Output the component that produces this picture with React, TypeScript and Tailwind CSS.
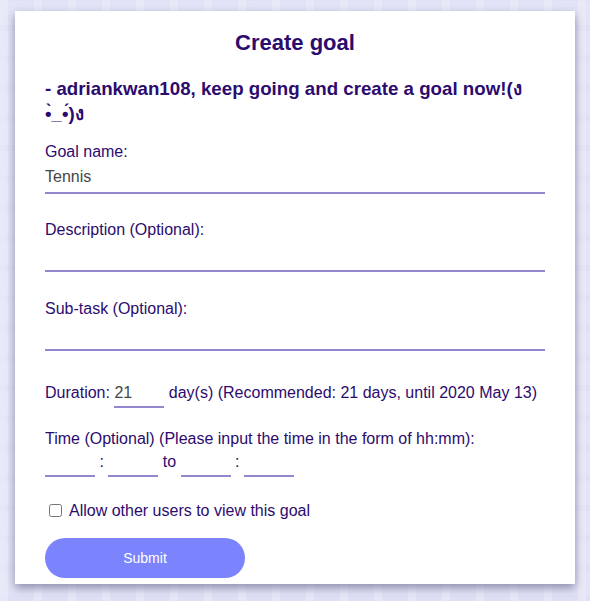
export default function App() {
  return (
    <div className="min-h-[601px] w-full bg-[#e3e4f7] bg-[repeating-linear-gradient(90deg,rgba(255,255,255,0.22)_0px,rgba(255,255,255,0.22)_8px,transparent_8px,transparent_34px),repeating-linear-gradient(0deg,rgba(205,205,240,0.18)_0px,rgba(205,205,240,0.18)_6px,transparent_6px,transparent_30px)] pt-[11px] font-['Liberation_Sans',Arial,sans-serif]">
      <div className="ml-[15px] w-[560px] bg-white px-[30px] pt-[19px] pb-[6px] text-[#2c0b6e] shadow-[0_4px_9px_rgba(70,70,110,0.55)]">
        <h2 className="text-center text-[22px] leading-[26px] font-bold">Create goal</h2>

        <h3 className="mt-[20px] text-[18.72px] leading-[25px] font-bold">
          - adriankwan108, keep going and create a goal now!(ง
          <br />
          {"\u2022\u0300_\u2022\u0301)\u0E07"}
        </h3>

        {/* Goal name */}
        <label className="mt-[17px] block text-[16px] leading-[18px]">Goal name:</label>
        <input
          defaultValue="Tennis"
          className="block h-[33px] w-full border-0 border-b-2 border-[#9386cf] bg-transparent text-[16px] text-[#454545] outline-none"
        />

        {/* Description */}
        <label className="mt-[27px] block text-[16px] leading-[18px]">Description (Optional):</label>
        <input className="block h-[33px] w-full border-0 border-b-2 border-[#9386cf] bg-transparent text-[16px] outline-none" />

        {/* Sub-task */}
        <label className="mt-[28px] block text-[16px] leading-[18px]">Sub-task (Optional):</label>
        <input className="block h-[33px] w-full border-0 border-b-2 border-[#9386cf] bg-transparent text-[16px] outline-none" />

        {/* Duration */}
        <div className="mt-[29px] flex items-baseline whitespace-pre text-[16px] leading-[18px]">
          <span>Duration: </span>
          <input
            defaultValue="21"
            className="h-[28px] w-[50px] border-0 border-b-2 border-[#9386cf] bg-transparent text-[16px] text-[#454545] outline-none"
          />
          <span> day(s) (Recommended: 21 days, until 2020 May 13)</span>
        </div>

        {/* Time */}
        <div className="mt-[22px] text-[16px] leading-[18px]">
          Time (Optional) (Please input the time in the form of hh:mm):
        </div>
        <div className="mt-[1px] flex items-baseline whitespace-pre text-[16px] leading-[18px]">
          <input className="h-[28px] w-[50px] border-0 border-b-2 border-[#9386cf] bg-transparent outline-none" />
          <span> : </span>
          <input className="h-[28px] w-[50px] border-0 border-b-2 border-[#9386cf] bg-transparent outline-none" />
          <span> to </span>
          <input className="h-[28px] w-[50px] border-0 border-b-2 border-[#9386cf] bg-transparent outline-none" />
          <span> : </span>
          <input className="h-[28px] w-[50px] border-0 border-b-2 border-[#9386cf] bg-transparent outline-none" />
        </div>

        {/* Public toggle */}
        <label className="mt-[24px] flex items-center text-[16px] leading-[18px]">
          <input type="checkbox" className="m-[3px_7px_3px_4px] h-[13px] w-[13px]" />
          Allow other users to view this goal
        </label>

        <button className="mt-[18px] h-[40px] w-[200px] rounded-full bg-[#7c84fd] text-[14px] text-white">
          Submit
        </button>
      </div>
    </div>
  );
}
